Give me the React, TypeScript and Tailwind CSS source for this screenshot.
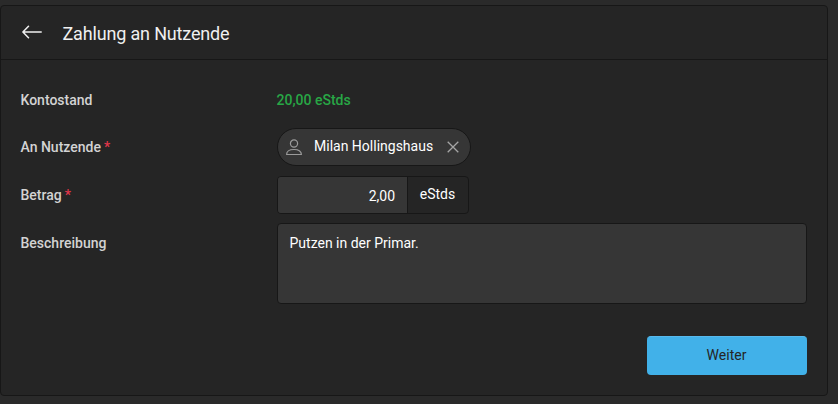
import { ReactNode } from "react";

type FieldProps = {
    label: string;
    required?: boolean;
    className?: string;
    children: ReactNode;
};

const Field = ({ label, required, className = "", children }: FieldProps) => {
    return (
        <div className={`flex items-start ${className}`}>
            <label className="w-[256.5px] shrink-0 pt-[9px] text-[14px] leading-5 font-medium text-[#d3d3d3]">
                {label}
                {required && <span className="ml-[3px] text-[#e2364a]">*</span>}
            </label>
            <div className="flex-1">{children}</div>
        </div>
    );
};

const ArrowLeft = () => (
    <svg width="20" height="14" viewBox="0 0 20 14" fill="none" stroke="#f0f0f0" strokeWidth="1.5" strokeLinecap="round" strokeLinejoin="round">
        <path d="M19.2 7H1M6.5 1.2L.9 7l5.6 5.8" />
    </svg>
);

const UserIcon = () => (
    <svg width="16" height="17" viewBox="0 0 16 17" fill="none" stroke="#9a9a9a" strokeWidth="1.2" strokeLinejoin="round">
        <circle cx="8" cy="4.5" r="3.6" />
        <path d="M.6 15.5C.6 12.4 3.7 10.5 8 10.5s7.4 1.9 7.4 5z" />
    </svg>
);

const CloseIcon = () => (
    <svg width="12" height="12" viewBox="0 0 12 12" fill="none" stroke="#a5a5a5" strokeWidth="1.3">
        <path d="M.7.7l10.6 10.6M11.3.7L.7 11.3" />
    </svg>
);

const App = () => {
    return (
        <div className="h-[404px] w-[838px] bg-[#2a2a2a] pt-[5px] font-[Roboto,sans-serif] text-[14px] leading-5 text-white">
            <div className="h-[391px] w-[828px] rounded-[4px] border border-[#171717] bg-[#252525]">
                {/* Header */}
                <div className="flex h-[54px] items-center border-b border-[#171717] pl-[21px]">
                    <button className="mb-[2px] flex" aria-label="Zurück">
                        <ArrowLeft />
                    </button>
                    <h1 className="ml-[20.5px] pt-[2px] text-[18px] leading-6 tracking-[-0.17px] text-[#f0f0f0]">Zahlung an Nutzende</h1>
                </div>

                {/* Form */}
                <div className="pt-5 pr-5 pl-[19.5px]">
                    <Field label="Kontostand" className="h-[48px] pt-px">
                        <div className="-ml-[0.5px] pt-[9px] font-medium text-[#28a745]">20,00 eStds</div>
                    </Field>

                    <Field label="An Nutzende" required className="h-[48px]">
                        <div className="flex h-[38px] w-[194px] items-center rounded-full border border-[#171717] bg-[#363636] pl-[8px]">
                            <UserIcon />
                            <span className="ml-[12px] pb-[2px]">Milan Hollingshaus</span>
                            <button className="ml-[14px] flex" aria-label="Entfernen">
                                <CloseIcon />
                            </button>
                        </div>
                    </Field>

                    <Field label="Betrag" required className="h-[47px]">
                        <div className="flex h-[38px] w-[192px] overflow-hidden rounded-[4px] border border-[#171717]">
                            <div className="w-[129px] bg-[#363636] pt-[9px] pr-[12px] text-right">2,00</div>
                            <div className="flex-1 border-l border-[#171717] pt-[7px] pr-px text-center">eStds</div>
                        </div>
                    </Field>

                    <div className="flex items-start">
                        <label className="w-[256.5px] shrink-0 pt-[10px] font-medium text-[#d3d3d3]">Beschreibung</label>
                        <div className="h-[81px] flex-1 rounded-[4px] border border-[#171717] bg-[#363636] px-[11.5px] pt-[9px]">
                            Putzen in der Primar.
                        </div>
                    </div>

                    <div className="mt-8 flex justify-end">
                        <button className="h-[39px] w-[160px] rounded-[4px] border-t border-[#58b9ec] bg-[#41b1e9] pr-px pb-[2px] text-[#252525]">
                            Weiter
                        </button>
                    </div>
                </div>
            </div>
        </div>
    );
};

export default App;
